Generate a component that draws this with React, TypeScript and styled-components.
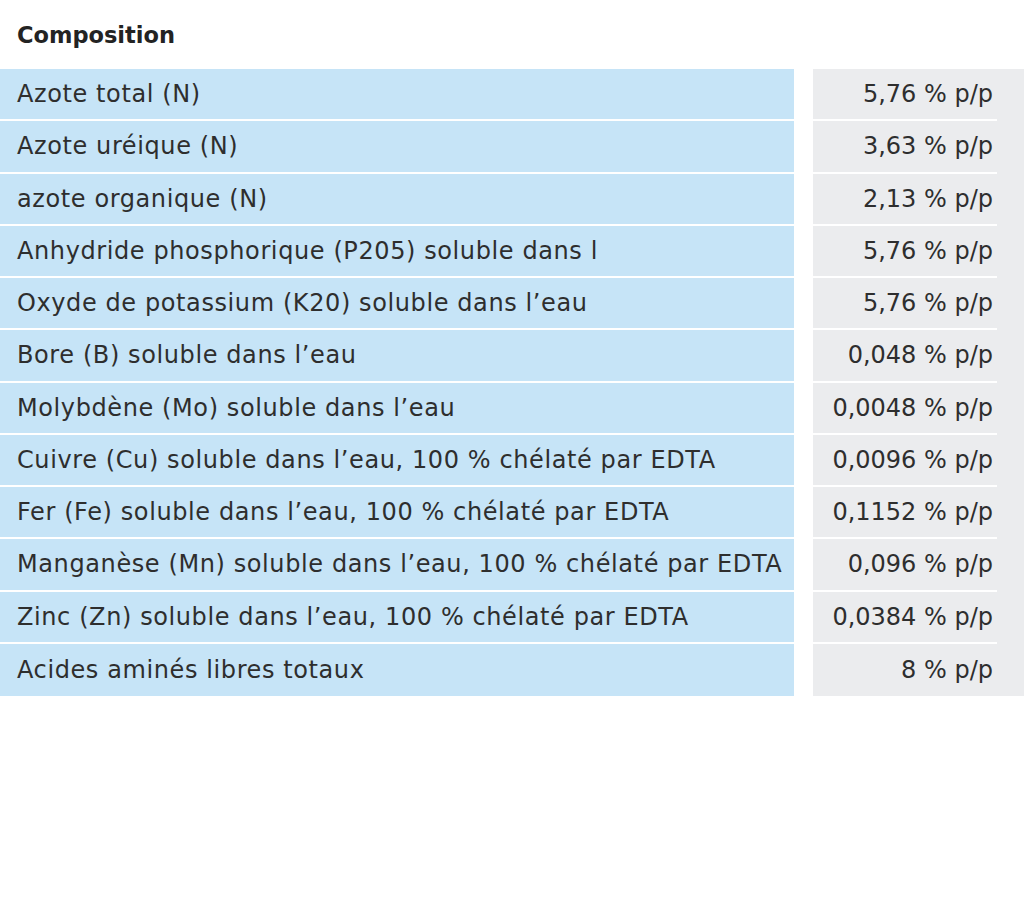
import * as React from 'react';
import styled, { createGlobalStyle } from 'styled-components';

const GlobalStyle = createGlobalStyle`
  html, body {
    margin: 0;
    padding: 0;
    background: #ffffff;
  }
  body {
    font-family: 'DejaVu Sans', 'Liberation Sans', sans-serif;
    color: #2e2e2e;
  }
`;

const Page = styled.div`
  width: 1024px;
  height: 922px;
  background: #ffffff;
`;

const Title = styled.h2`
  margin: 0;
  height: 69px;
  padding: 0 0 0 17px;
  display: flex;
  align-items: center;
  font-size: 22.5px;
  font-weight: 700;
  color: #232323;
  box-sizing: border-box;
`;

const Table = styled.div`
  display: grid;
  grid-template-columns: 794px 1fr;
  grid-auto-rows: 1fr;
  column-gap: 19px;
  height: 627px;
`;

const LabelCell = styled.div<{ last?: boolean }>`
  display: flex;
  align-items: center;
  padding-left: 17px;
  background: #c6e4f7;
  border-bottom: ${(p) => (p.last ? '0' : '2px solid #ffffff')};
  font-size: 24px;
  letter-spacing: 0.6px;
  white-space: nowrap;
  overflow: hidden;
`;

const ValueCell = styled.div<{ last?: boolean }>`
  display: flex;
  align-items: center;
  justify-content: flex-end;
  padding-right: 31px;
  background: ${(p) =>
    p.last
      ? '#ebecee'
      : 'linear-gradient(#ffffff, #ffffff) no-repeat left bottom / 184px 2px, #ebecee'};
  padding-bottom: ${(p) => (p.last ? '0' : '2px')};
  font-size: 24px;
  white-space: nowrap;
`;

const rows: [string, string][] = [
  ['Azote total (N)', '5,76 % p/p'],
  ['Azote uréique (N)', '3,63 % p/p'],
  ['azote organique (N)', '2,13 % p/p'],
  ['Anhydride phosphorique (P205) soluble dans l', '5,76 % p/p'],
  ['Oxyde de potassium (K20) soluble dans l’eau', '5,76 % p/p'],
  ['Bore (B) soluble dans l’eau', '0,048 % p/p'],
  ['Molybdène (Mo) soluble dans l’eau', '0,0048 % p/p'],
  ['Cuivre (Cu) soluble dans l’eau, 100 % chélaté par EDTA', '0,0096 % p/p'],
  ['Fer (Fe) soluble dans l’eau, 100 % chélaté par EDTA', '0,1152 % p/p'],
  ['Manganèse (Mn) soluble dans l’eau, 100 % chélaté par EDTA', '0,096 % p/p'],
  ['Zinc (Zn) soluble dans l’eau, 100 % chélaté par EDTA', '0,0384 % p/p'],
  ['Acides aminés libres totaux', '8 % p/p']
];

export default function App() {
  return (
    <Page>
      <GlobalStyle />
      <Title>Composition</Title>
      <Table>
        {rows.map(([label, value], idx) => {
          const last = idx === rows.length - 1;
          return (
            <React.Fragment key={idx}>
              <LabelCell last={last}>{label}</LabelCell>
              <ValueCell last={last}>{value}</ValueCell>
            </React.Fragment>
          );
        })}
      </Table>
    </Page>
  );
}
